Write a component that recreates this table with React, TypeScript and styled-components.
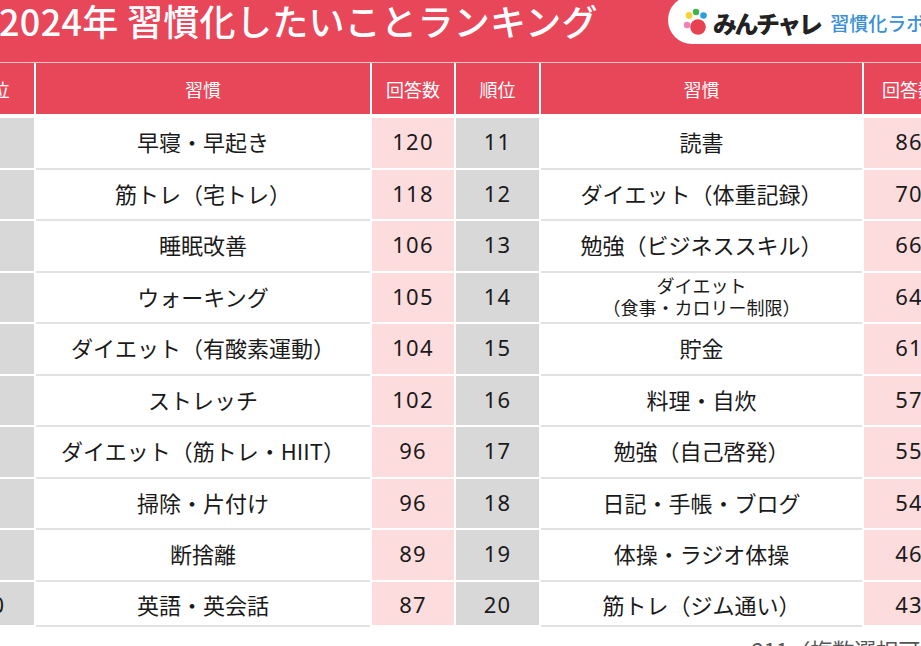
import React from 'react';
import styled, { createGlobalStyle } from 'styled-components';

const GlobalStyle = createGlobalStyle`
  body {
    margin: 0;
    background: #ffffff;
    font-family: "Noto Sans CJK JP", "Noto Sans", sans-serif;
  }
`

const RED = '#e8475a'

type Row = { rank: number; habit: string; sub?: string; count: number }

const leftRows: Row[] = [
  { rank: 1, habit: '早寝・早起き', count: 120 },
  { rank: 2, habit: '筋トレ（宅トレ）', count: 118 },
  { rank: 3, habit: '睡眠改善', count: 106 },
  { rank: 4, habit: 'ウォーキング', count: 105 },
  { rank: 5, habit: 'ダイエット（有酸素運動）', count: 104 },
  { rank: 6, habit: 'ストレッチ', count: 102 },
  { rank: 7, habit: 'ダイエット（筋トレ・HIIT）', count: 96 },
  { rank: 8, habit: '掃除・片付け', count: 96 },
  { rank: 9, habit: '断捨離', count: 89 },
  { rank: 10, habit: '英語・英会話', count: 87 },
]

const rightRows: Row[] = [
  { rank: 11, habit: '読書', count: 86 },
  { rank: 12, habit: 'ダイエット（体重記録）', count: 70 },
  { rank: 13, habit: '勉強（ビジネススキル）', count: 66 },
  { rank: 14, habit: 'ダイエット', sub: '（食事・カロリー制限）', count: 64 },
  { rank: 15, habit: '貯金', count: 61 },
  { rank: 16, habit: '料理・自炊', count: 57 },
  { rank: 17, habit: '勉強（自己啓発）', count: 55 },
  { rank: 18, habit: '日記・手帳・ブログ', count: 54 },
  { rank: 19, habit: '体操・ラジオ体操', count: 46 },
  { rank: 20, habit: '筋トレ（ジム通い）', count: 43 },
]

const Frame = styled.div`
  width: 921px;
  height: 646px;
  overflow: hidden;
`

const Canvas = styled.div`
  width: 1009px;
  margin-left: -51px;
`

const TitleBar = styled.div`
  height: 62px;
  background: ${RED};
  display: flex;
  justify-content: space-between;
  align-items: flex-start;
  padding-left: 50px;
  box-sizing: border-box;
`

const Title = styled.h1`
  margin: 0;
  color: #ffffff;
  font-size: 36px;
  font-weight: 500;
  line-height: 40px;
  letter-spacing: 0.3px;
  white-space: nowrap;
`

const LogoPill = styled.div`
  margin-top: -4px;
  width: 290px;
  height: 48px;
  background: #ffffff;
  border-radius: 24px 0 0 24px;
  display: flex;
  align-items: center;
  padding: 4px 0 0 15px;
  box-sizing: border-box;
`

const LogoMark = styled.span`
  font-size: 24px;
  font-weight: 900;
  color: #222222;
  letter-spacing: -2.5px;
  margin-left: 2px;
  white-space: nowrap;
`

const LogoSub = styled.span`
  font-size: 19px;
  font-weight: 500;
  color: #3a8fd6;
  margin-left: 10px;
  white-space: nowrap;
`

const Grid = styled.div`
  display: grid;
  grid-template-columns: 85px 334px 82px 83px 321px 90px;
  column-gap: 2px;
  background: #ffffff;
`

const HeadGrid = styled(Grid)`
  border-top: 1px solid #f3c3c9;
  margin-bottom: 4px;
`

const HeadCell = styled.div`
  height: 51px;
  background: ${RED};
  color: #ffffff;
  font-size: 18px;
  font-weight: 400;
  display: flex;
  align-items: center;
  justify-content: center;
  white-space: nowrap;
  overflow: hidden;
`

const Cell = styled.div<{ $kind: 'rank' | 'habit' | 'count'; $last?: boolean }>`
  height: ${p => (p.$last ? '45px' : '51.5px')};
  box-sizing: border-box;
  padding: ${p => (p.$last ? '3px 0 0' : '0 0 3px')};
  border-bottom: 2px solid ${p => (p.$kind === 'habit' ? '#e2e2e2' : '#ffffff')};
  background: ${p =>
    p.$kind === 'rank' ? '#d8d8d8' : p.$kind === 'count' ? '#fddcdd' : '#ffffff'};
  color: #1a1a1a;
  display: flex;
  flex-direction: column;
  align-items: center;
  justify-content: center;
  font-family: ${p => (p.$kind === 'habit'
    ? '"Noto Sans CJK JP", sans-serif'
    : '"Noto Sans", "Noto Sans CJK JP", sans-serif')};
  font-size: 22px;
  letter-spacing: ${p => (p.$kind === 'habit' ? '0' : '1.2px')};
  font-weight: 400;
  white-space: nowrap;
  overflow: hidden;
  line-height: 1.2;
`

const SmallLine = styled.span`
  font-size: 18px;
  line-height: 22px;
`

const Footnote = styled.div`
  margin: 6px 0 0 777px;
  font-size: 22px;
  color: #555555;
  white-space: nowrap;
  line-height: 33px;
`

function Dots() {
  return (
    <svg width="28" height="28" viewBox="0 0 28 28">
      <circle cx="6" cy="7.5" r="3.4" fill="#f6d23a" />
      <circle cx="13" cy="4" r="3.2" fill="#3db54a" />
      <circle cx="20.5" cy="7.5" r="3.3" fill="#2b9ee0" />
      <circle cx="4" cy="17" r="3.2" fill="#f27fb6" />
      <circle cx="15" cy="19" r="7.8" fill="#e8414f" />
    </svg>
  )
}

function RowCells({ row, last }: { row: Row; last: boolean }) {
  return <>
    <Cell $kind="rank" $last={last}>{row.rank}</Cell>
    <Cell $kind="habit" $last={last}>
      {row.sub
        ? <><SmallLine>{row.habit}</SmallLine><SmallLine>{row.sub}</SmallLine></>
        : row.habit}
    </Cell>
    <Cell $kind="count" $last={last}>{row.count}</Cell>
  </>
}

function App() {
  return <Frame>
    <GlobalStyle />
    <Canvas>
      <TitleBar>
        <Title>2024年 習慣化したいことランキング</Title>
        <LogoPill>
          <Dots />
          <LogoMark>みんチャレ</LogoMark>
          <LogoSub>習慣化ラボ</LogoSub>
        </LogoPill>
      </TitleBar>
      <HeadGrid>
        {['順位', '習慣', '回答数', '順位', '習慣', '回答数'].map((label, idx) =>
          <HeadCell key={idx}>{label}</HeadCell>
        )}
      </HeadGrid>
      <Grid>
        {leftRows.map((row, idx) =>
          <React.Fragment key={row.rank}>
            <RowCells row={row} last={idx === leftRows.length - 1} />
            <RowCells row={rightRows[idx]} last={idx === leftRows.length - 1} />
          </React.Fragment>
        )}
      </Grid>
      <Footnote>n=211（複数選択可）</Footnote>
    </Canvas>
  </Frame>
}

export default App;
